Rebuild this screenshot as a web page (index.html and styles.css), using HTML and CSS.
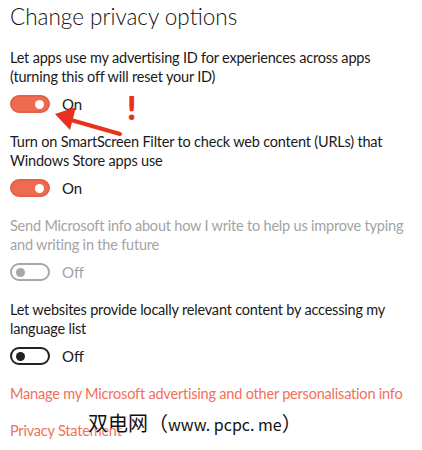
FILE: index.html
```html
<!DOCTYPE html>
<html lang="en">

<head>
    <meta charset="UTF-8">
    <meta name="viewport" content="width=device-width, initial-scale=1.0">
    <title>Change privacy options</title>
    <link rel="stylesheet" href="styles.css">
</head>

<body>
    <div class="page">
        <h1>Change privacy options</h1>

        <div class="option">
            <p>Let apps use my advertising ID for experiences across apps<br>(turning this off will reset your ID)</p>
            <div class="switch-row">
                <span class="toggle on"><span class="knob"></span></span>
                <span class="state">On</span>
            </div>
        </div>

        <div class="option">
            <p>Turn on SmartScreen Filter to check web content (URLs) that<br>Windows Store apps use</p>
            <div class="switch-row">
                <span class="toggle on"><span class="knob"></span></span>
                <span class="state">On</span>
            </div>
        </div>

        <div class="option disabled">
            <p>Send Microsoft info about how I write to help us improve typing<br>and writing in the future</p>
            <div class="switch-row">
                <span class="toggle"><span class="knob"></span></span>
                <span class="state">Off</span>
            </div>
        </div>

        <div class="option">
            <p>Let websites provide locally relevant content by accessing my<br>language list</p>
            <div class="switch-row">
                <span class="toggle"><span class="knob"></span></span>
                <span class="state">Off</span>
            </div>
        </div>

        <a class="link" href="#">Manage my Microsoft advertising and other personalisation info</a>
        <a class="link" href="#">Privacy Statement</a>

        <!-- annotation drawn over the screenshot -->
        <svg class="arrow" width="90" height="50" viewBox="0 0 90 50">
            <line x1="68" y1="42" x2="12" y2="26" stroke="#e8321e" stroke-width="4" stroke-linecap="round" />
            <polygon points="3,22 24,15 18,38" fill="#e8321e" />
        </svg>
        <span class="bang">!</span>

        <span class="watermark">双电网（<span class="wm-latin">www. pcpc. me</span>）</span>
    </div>
</body>

</html>
```

FILE: styles.css
```css
body {
    margin: 0;
    background: #fff;
    font-family: Lato, "Open Sans", sans-serif;
    color: #1a1a1a;
}

.page {
    position: relative;
    width: 422px;
    height: 450px;
    padding: 2px 0 0 10px;
    box-sizing: border-box;
    overflow: hidden;
}

h1 {
    margin: 0 0 16px;
    font-size: 22.5px;
    font-weight: 300;
    line-height: 30px;
    color: #111;
    white-space: nowrap;
}

.option {
    margin-bottom: 19px;
}

.option p {
    margin: 0;
    font-size: 14.5px;
    letter-spacing: -0.2px;
    line-height: 19px;
    white-space: nowrap;
}

.switch-row {
    display: flex;
    align-items: center;
    gap: 12px;
    margin-top: 9px;
    height: 18px;
}

.toggle {
    box-sizing: border-box;
    width: 40px;
    height: 18px;
    border: 2px solid #222;
    border-radius: 9px;
    display: flex;
    align-items: center;
    padding: 0 4px;
}

.toggle .knob {
    width: 9px;
    height: 9px;
    border-radius: 50%;
    background: #222;
}

.toggle.on {
    background: #ee6a50;
    border-color: #e4604a;
    justify-content: flex-end;
}

.toggle.on .knob {
    background: #fff;
}

.state {
    font-size: 15px;
    line-height: 18px;
}

.disabled p,
.disabled .state {
    color: #a3a3a3;
}

.disabled .toggle {
    border-color: #a8a8a8;
}

.disabled .toggle .knob {
    background: #a8a8a8;
}

.link {
    display: block;
    font-size: 14.5px;
    letter-spacing: -0.2px;
    line-height: 19px;
    color: #f07058;
    text-decoration: none;
    white-space: nowrap;
}

.link + .link {
    margin-top: 18px;
}

.arrow {
    position: absolute;
    left: 52px;
    top: 92px;
}

.bang {
    position: absolute;
    left: 127px;
    top: 88px;
    font-size: 32px;
    font-weight: 800;
    line-height: 40px;
    color: #e8321e;
}

.watermark {
    position: absolute;
    left: 88px;
    top: 410px;
    font-family: "Noto Sans CJK SC", sans-serif;
    font-size: 20px;
    line-height: 26px;
    color: #111;
    text-shadow: 0 0 2px #fff, 0 0 2px #fff;
    white-space: nowrap;
}

.wm-latin {
    font-size: 16px;
}
```
